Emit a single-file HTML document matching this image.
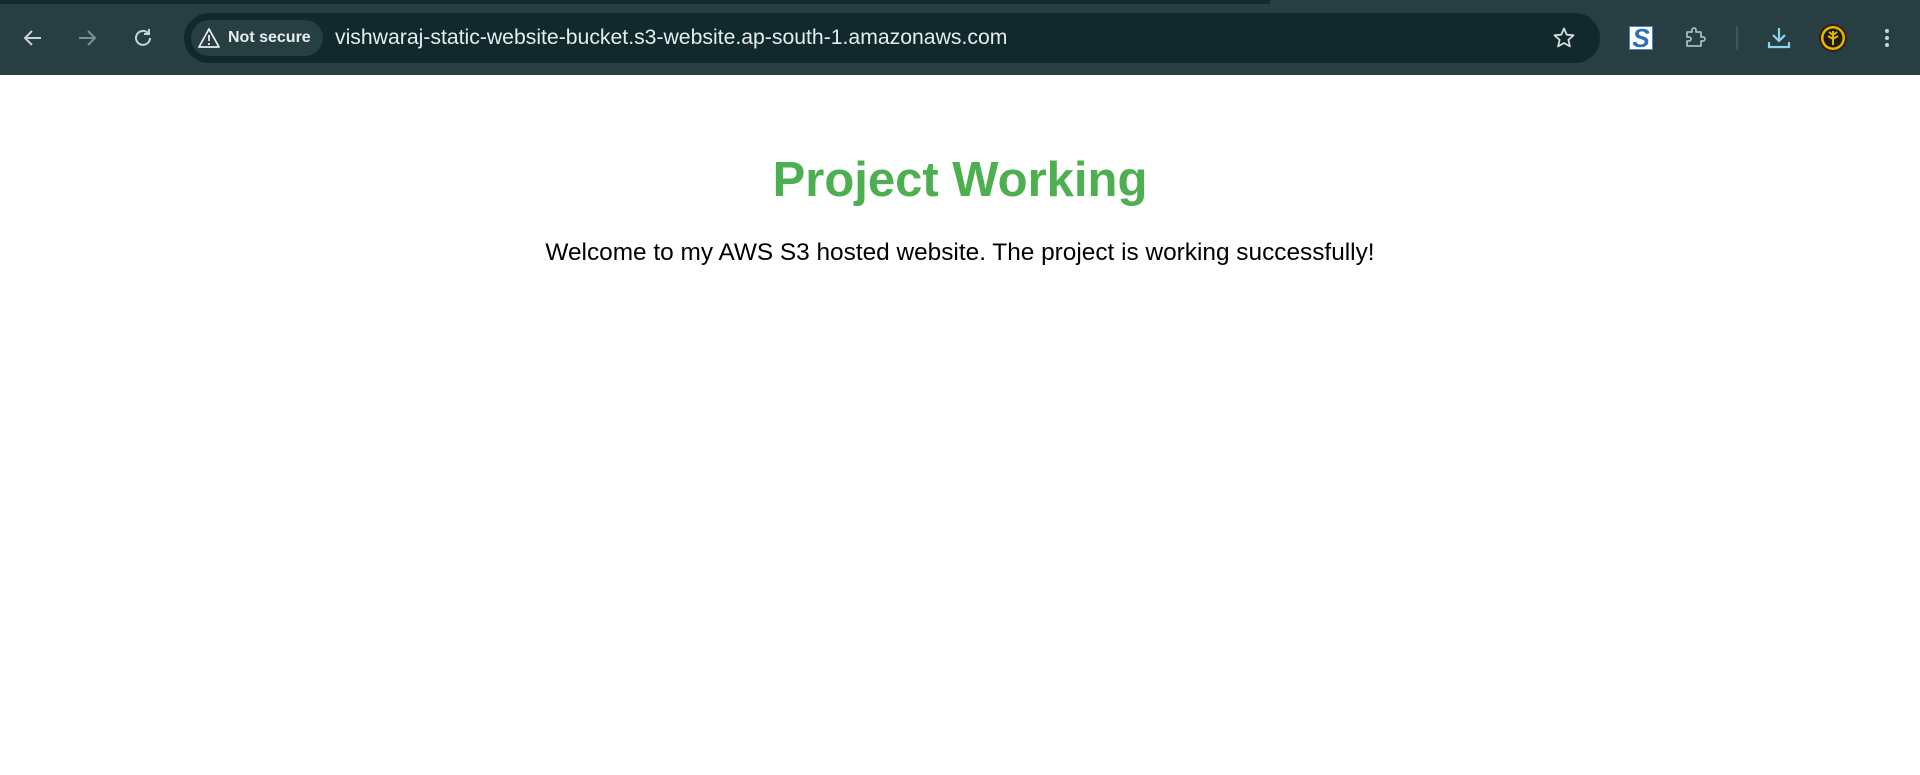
<!DOCTYPE html>
<html><head><meta charset="utf-8"><style>
*{margin:0;padding:0;box-sizing:border-box}
body{width:1920px;height:775px;background:#fff;font-family:"Liberation Sans",Arial,sans-serif;position:relative;overflow:hidden}
.bar{position:absolute;left:0;top:0;width:1920px;height:75px;background:#273e43}
.strip{position:absolute;left:0;top:0;width:1920px;height:4px;background:#152a2f}
.strip2{position:absolute;left:1270px;top:0;width:650px;height:4px;background:#273e43}
.omni{position:absolute;left:184px;top:13px;width:1416px;height:50px;border-radius:25px;background:#11292d}
.chip{position:absolute;left:191px;top:20px;width:132px;height:36px;border-radius:18px;background:#273e43;color:#e6eeee;font-size:16px;font-weight:bold;line-height:36px;padding-left:37px}
.url{position:absolute;left:335px;top:24px;color:#e4ecec;font-size:21.2px;line-height:28px}
.ic{position:absolute}
h1{position:absolute;left:0;width:1920px;top:152px;text-align:center;color:#4caf50;font-size:49px;line-height:56px;font-weight:bold}
p{position:absolute;left:0;width:1920px;top:239px;text-align:center;color:#000;font-size:24.4px;line-height:28px}
</style></head><body>
<div class="bar"></div><div class="strip"></div><div class="strip2"></div>
<svg class="ic" style="left:21px;top:26px" width="24" height="24" viewBox="0 0 24 24"><path d="M20 12H5M11 5l-7 7 7 7" fill="none" stroke="#c7d3d4" stroke-width="2"/></svg>
<svg class="ic" style="left:75px;top:26px" width="24" height="24" viewBox="0 0 24 24"><path d="M4 12h15M13 5l7 7-7 7" fill="none" stroke="#7d8f91" stroke-width="2"/></svg>
<svg class="ic" style="left:131px;top:26px" width="24" height="24" viewBox="0 0 24 24"><path d="M19 12a7 7 0 1 1-2-5" fill="none" stroke="#c7d3d4" stroke-width="2"/><path d="M18 3v5h-5" fill="none" stroke="#c7d3d4" stroke-width="2"/></svg>
<div class="omni"></div>
<div class="chip">Not secure</div>
<svg class="ic" style="left:198px;top:27px" width="22" height="22" viewBox="0 0 22 22"><path d="M11 2L1 20h20z" fill="none" stroke="#e6eeee" stroke-width="1.8" stroke-linejoin="round"/><path d="M11 8v6M11 16v2" stroke="#e6eeee" stroke-width="1.8"/></svg>
<div class="url">vishwaraj-static-website-bucket.s3-website.ap-south-1.amazonaws.com</div>
<svg class="ic" style="left:1552px;top:26px" width="24" height="24" viewBox="0 0 24 24"><path d="M12 2.5l2.8 6.2 6.7.6-5.1 4.5 1.5 6.6L12 17l-5.9 3.4 1.5-6.6-5.1-4.5 6.7-.6z" fill="none" stroke="#d4dcdd" stroke-width="1.8" stroke-linejoin="round"/></svg>
<div class="ic" style="left:1629px;top:26px;width:24px;height:24px;background:#fff;border:1px solid #4a86c5;color:#2e6fb5;font-weight:bold;font-size:26px;line-height:22px;text-align:center;font-style:italic">S</div>
<svg class="ic" style="left:1684px;top:26px" width="24" height="24" viewBox="0 0 24 24"><path d="M3 6h5V4a2 2 0 0 1 4 0v2h5v5h2a2 2 0 0 1 0 4h-2v5H3v-5h2a2 2 0 0 0 0-4H3z" fill="none" stroke="#a9b9bb" stroke-width="1.8" stroke-linejoin="round"/></svg>
<div class="ic" style="left:1736px;top:26px;width:2px;height:24px;background:#3f575b"></div>
<svg class="ic" style="left:1766px;top:25px" width="26" height="26" viewBox="0 0 26 26"><path d="M13 3v13M7 10l6 6 6-6M3 17v5h20v-5" fill="none" stroke="#8dd3f0" stroke-width="2.2"/></svg>
<svg class="ic" style="left:1818px;top:23px" width="30" height="30" viewBox="0 0 30 30"><circle cx="15" cy="15" r="14" fill="#3a1a10"/><circle cx="15" cy="15" r="12" fill="#e0b800"/><circle cx="15" cy="15" r="9.5" fill="#1e1a10"/><path d="M15 8v14M15 12l-4-3M15 12l4-3M15 16l-5-3M15 16l5-3" stroke="#e0b800" stroke-width="2"/></svg>
<svg class="ic" style="left:1877px;top:26px" width="20" height="24" viewBox="0 0 20 24"><circle cx="10" cy="5" r="2" fill="#c7d3d4"/><circle cx="10" cy="12" r="2" fill="#c7d3d4"/><circle cx="10" cy="19" r="2" fill="#c7d3d4"/></svg>
<h1>Project Working</h1>
<p>Welcome to my AWS S3 hosted website. The project is working successfully!</p>
</body></html>
